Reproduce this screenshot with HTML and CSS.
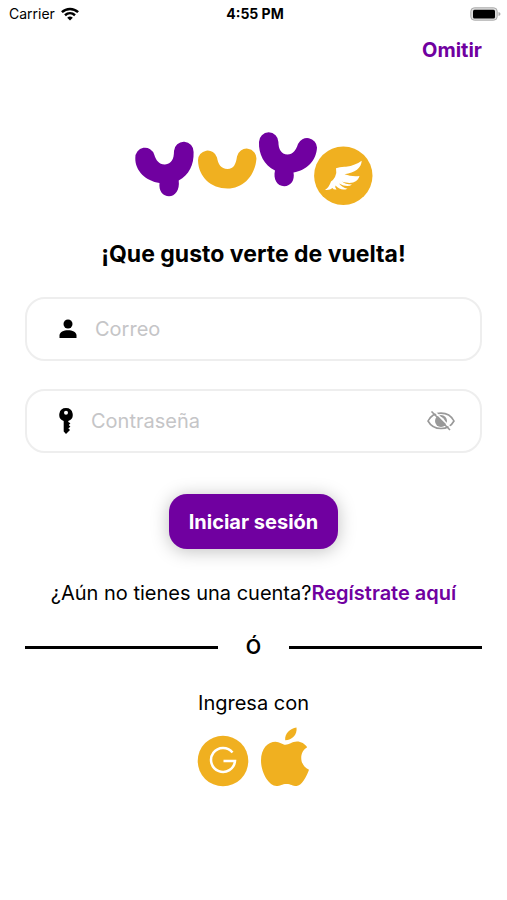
FILE: index.html
```html
<!DOCTYPE html>
<html lang="es">
<head>
<meta charset="utf-8">
<meta name="viewport" content="width=device-width, initial-scale=1">
<title>Yuyo</title>
<link rel="stylesheet" href="styles.css">
</head>
<body>
<header class="status">
  <div class="carrier"><span>Carrier</span>
    <svg width="18" height="14" viewBox="0 0 18 14" aria-hidden="true"><g fill="none" stroke="#000" stroke-width="2.5"><path d="M.9 5.1C5.500.8 12.500.8 17.100 5.100"/><path d="M4 8.300C7 5.600 11 5.600 14 8.300"/></g><path d="M6.200 10.700Q9 8.400 11.800 10.700L9 13.600Z"/></svg>
  </div>
  <span class="time">4:55 PM</span>
  <svg class="battery" width="31" height="14" viewBox="0 0 31 14" aria-hidden="true"><rect x=".8" y=".8" width="26.400" height="12.400" rx="3.500" fill="#ddd" stroke="#aaa"/><rect x="3" y="2.700" width="22" height="8.800" rx="1.500"/><path d="M28.500 5Q30.500 5.500 30.500 7T28.500 9Z" fill="#aaa"/></svg>
</header>
<nav class="top"><a href="#" class="accent">Omitir</a></nav>
<main class="login">
  <svg class="logo" width="240" height="76" viewBox="134 131 240 76" role="img" aria-label="Yuyo">
    <g fill="#7000a0">
      <path d="M135.300 158A9.700 9.700 0 0 1 154.300 154.700C156 160 159 164.700 165 164.500C171.500 164 174 159 174 151A9.800 9.800 0 0 1 193.600 152C194 165 189 175 178.700 180.500C180 190 175 196.300 169 196.300C163 196.300 158.500 191 159.500 183C146 181 135 171 135.300 158Z"/>
      <path d="M259 142A9.700 9.700 0 0 1 278.400 142C278.500 149 281 154.300 287.500 154.500C293 154.500 296 150 298 144A9.900 9.900 0 0 1 317 147.500C316.500 160 307 170.500 293.500 172.500C295 180 291 186.200 284.200 186.200C277 186.200 273 179 275 170.500C264 165 258.500 154 259 142Z"/>
    </g>
    <g fill="#f0b020">
      <path d="M198 160.500A9.700 9.700 0 0 1 217 157.500C218 164 221 169 227.500 169C234 169 236 163.500 237 156.500A9.800 9.800 0 0 1 256.400 159C255 176 243 188.500 227.500 188.500C211 188.500 198.500 177 198 160.500Z"/>
      <circle cx="343.300" cy="175.700" r="29.200"/>
    </g>
    <path fill="#fff" d="M336 168.300Q340 166.500 346 166.800Q355.500 165.500 361.700 160.800C361.500 168 355 173 344.500 174.300Q352 177 359.500 176C358 181.500 352 185 342 181.500Q345 184.500 352 184.500Q347.500 188 339 183.500Q342 187.500 347.500 188.700Q341 191.500 335.500 185.500Q334.500 187 336.500 189.500Q333.500 190 332.500 188Q330 190.500 325 190Q329 187.500 331 181.500Q333 180.500 335 177Q337 172.500 336 168.300Z"/>
  </svg>
  <h1>¡Que gusto verte de vuelta!</h1>
  <form class="form">
    <div class="field user">
      <svg width="18" height="20" viewBox="0 0 18 20" aria-hidden="true"><circle cx="9" cy="5" r="4.500"/><path d="M.5 19V16.500C.5 9.500 17.500 9.500 17.500 16.500V19Z"/></svg>
      <input type="email" placeholder="Correo" aria-label="Correo">
    </div>
    <div class="field">
      <svg width="14" height="26" viewBox="0 0 14 26" aria-hidden="true"><path fill-rule="evenodd" d="M7 0A6.700 6.700 0 0 1 9.300 13V14L11.400 15.300L9.800 17L11.400 18.700L9.300 20.200L11 22L7 26L4.700 23.500V13A6.700 6.700 0 0 1 7 0ZM7 2.700A2 2 0 1 0 7 6.700A2 2 0 1 0 7 2.700Z"/></svg>
      <input type="password" placeholder="Contraseña" aria-label="Contraseña">
      <button type="button" class="eye" aria-label="Mostrar contraseña"><svg width="28" height="20" viewBox="0 0 28 20" aria-hidden="true"><path d="M1 10C6.500-.5 21.500-.5 27 10C21.500 20 6.500 20 1 10Z" fill="none" stroke="#999" stroke-width="1.600"/><circle cx="14" cy="10" r="6" fill="#999"/><path d="M14 6.500Q17 7 17.300 10" fill="none" stroke="#fff"/><path d="M6-1L25 18" stroke="#fff" stroke-width="1.600"/><path d="M4.500.5L23 19" stroke="#999" stroke-width="1.600"/></svg></button>
    </div>
    <button type="submit" class="submit">Iniciar sesión</button>
  </form>
  <p class="register">¿Aún no tienes una cuenta?<a href="#" class="accent">Regístrate aquí</a></p>
  <div class="divider"><span>Ó</span></div>
  <p class="with">Ingresa con</p>
  <div class="social">
    <button type="button" aria-label="Google"><svg width="52" height="52" viewBox="0 0 52 52" aria-hidden="true"><circle cx="26" cy="26" r="25.300" fill="#f0b020"/><path d="M35.500 17.500A12 12 0 1 0 38 26H26.500" fill="none" stroke="#fff" stroke-width="2.500"/></svg></button>
    <button type="button" aria-label="Apple"><svg width="50" height="60" viewBox="1 0 50 59" preserveAspectRatio="none" aria-hidden="true"><g fill="#f0b020"><path d="M36.500.5C37.500 7.500 32 13 25.200 13C24.500 6.500 30 1.500 36.500.5Z"/><path d="M25.500 17.500C29 17.500 32 14.300 37 14.300C41 14.300 45 16.500 47.200 20C38.500 25 39.500 38 49 42C46.500 49 41.500 58 36.500 58C32.500 58 31 56 26.500 56C22 56 20 58 16.500 58C9 58 1 45 1 33C1 21 8 14.500 15.500 14.500C19.500 14.500 22.500 17.500 25.500 17.500Z"/></g></svg></button>
  </div>
</main>
</body>
</html>
```
FILE: styles.css
```css
* { box-sizing: border-box; }
body {
  margin: 0;
  background: #fff;
  color: #000;
  font: 20px/24px Inter, "Liberation Sans", sans-serif;
}
svg { display: block; flex: none; }
h1, p { margin: 0; }
button { border: 0; padding: 0; background: none; font: inherit; cursor: pointer; }
.accent { color: #7000a0; font-weight: 600; text-decoration: none; }
.status {
  display: grid;
  grid-template-columns: 1fr auto 1fr;
  align-items: center;
  height: 28px;
  padding: 0 6px 0 9px;
  font-size: 14px;
}
.carrier { display: flex; align-items: center; gap: 6px; }
.time { font-weight: 700; }
.battery { justify-self: end; }
.top { display: flex; justify-content: flex-end; padding: 10px 25px 0; }
.top .accent { font-weight: 700; }
.login {
  display: flex;
  flex-direction: column;
  align-items: center;
  padding: 69px 25px 32px;
}
h1 { margin-top: 31px; font-size: 23px; line-height: 32px; font-weight: 700; }
.form {
  display: flex;
  flex-direction: column;
  align-items: center;
  gap: 28px;
  width: 100%;
  margin-top: 27px;
}
.field {
  display: flex;
  align-items: center;
  gap: 18px;
  width: 100%;
  height: 64px;
  padding: 0 25px 0 32px;
  border: 2px solid #eee;
  border-radius: 20px;
}
.field input {
  flex: 1;
  min-width: 0;
  padding: 0;
  border: 0;
  outline: 0;
  background: none;
  font: inherit;
}
.field input::placeholder { color: #c5c5c7; opacity: 1; }
.submit {
  margin-top: 13px;
  height: 55px;
  padding: 0 20px;
  border-radius: 18px;
  background: #7000a0;
  box-shadow: 0 2px 18px rgba(0, 0, 0, .25);
  color: #fff;
  font-weight: 700;
}
.register { margin-top: 32px; text-align: center; }
.divider {
  display: flex;
  align-items: center;
  gap: 28px;
  width: 100%;
  margin-top: 30px;
  font-weight: 600;
}
.divider::before, .divider::after { content: ""; flex: 1; height: 3px; background: #000; }
.with { margin-top: 32px; }
.social { display: flex; align-items: flex-end; gap: 12px; margin-top: 12px; }
```
